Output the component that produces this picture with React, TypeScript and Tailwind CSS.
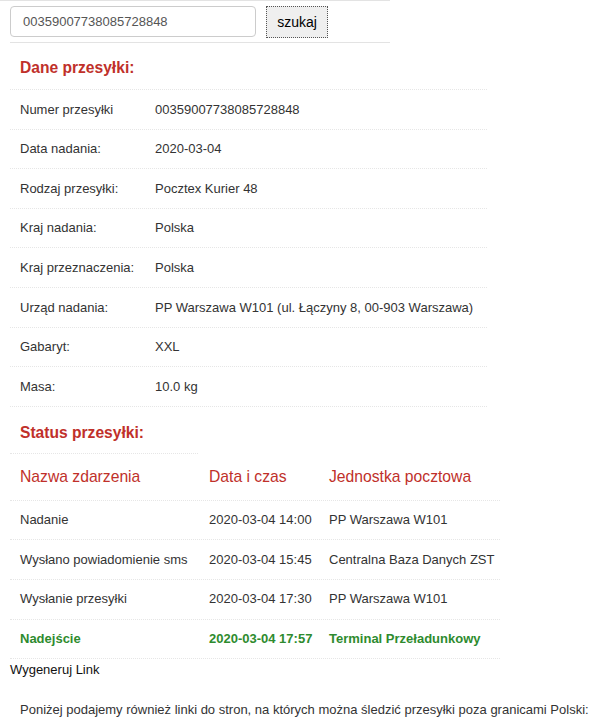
const details: [string, string][] = [
  ['Numer przesyłki', '00359007738085728848'],
  ['Data nadania:', '2020-03-04'],
  ['Rodzaj przesyłki:', 'Pocztex Kurier 48'],
  ['Kraj nadania:', 'Polska'],
  ['Kraj przeznaczenia:', 'Polska'],
  ['Urząd nadania:', 'PP Warszawa W101 (ul. Łączyny 8, 00-903 Warszawa)'],
  ['Gabaryt:', 'XXL'],
  ['Masa:', '10.0 kg'],
];

const events = [
  { name: 'Nadanie', date: '2020-03-04 14:00', unit: 'PP Warszawa W101', last: false },
  { name: 'Wysłano powiadomienie sms', date: '2020-03-04 15:45', unit: 'Centralna Baza Danych ZST', last: false },
  { name: 'Wysłanie przesyłki', date: '2020-03-04 17:30', unit: 'PP Warszawa W101', last: false },
  { name: 'Nadejście', date: '2020-03-04 17:57', unit: 'Terminal Przeładunkowy', last: true },
];

export default function App() {
  return (
    <div className="w-[613px] h-[720px] overflow-hidden bg-white text-[#333] font-['Liberation_Sans',Arial,sans-serif] text-[13px]">
      <div className="w-[390px] border-t border-[#e3e3e3]">
        <div className="flex items-start pl-[10px] pt-[5px] pb-[4px] ml-0">
          <div className="w-[246px] h-[31px] border border-[#ccc] rounded-[4px] flex items-center pl-[12px] text-[#555]">
            00359007738085728848
          </div>
          <button className="ml-[10px] w-[62px] h-[32px] bg-[#efefef] border border-dotted border-[#555] text-[14px] text-black">
            szukaj
          </button>
        </div>
        <div className="ml-[10px] border-b border-[#e3e3e3]" />
      </div>

      <h2 className="pl-[20px] pt-[15px] h-[46px] text-[#c0302a] font-bold text-[15.6px] leading-[20px]">
        Dane przesyłki:
      </h2>

      <div className="ml-[10px] w-[477px] border-t border-dotted border-[#e6e6e6]">
        {details.map(([label, value]) => (
          <div key={label} className="flex items-center h-[39.6px] border-b border-dotted border-[#e6e6e6]">
            <div className="w-[145px] pl-[10px]">{label}</div>
            <div className="whitespace-nowrap">{value}</div>
          </div>
        ))}
      </div>

      <div className="ml-[10px] w-[188px] h-[47px] border-b border-dotted border-[#e6e6e6] pl-[10px] pt-[16px]">
        <h2 className="text-[#c0302a] font-bold text-[15.6px] leading-[20px] whitespace-nowrap">Status przesyłki:</h2>
      </div>

      <div className="ml-[10px] w-[490px]">
        <div className="flex items-center h-[47px] border-b border-dotted border-[#e6e6e6] text-[15.7px] text-[#c0302a]">
          <div className="w-[199px] pl-[10px]">Nazwa zdarzenia</div>
          <div className="w-[120px]">Data i czas</div>
          <div>Jednostka pocztowa</div>
        </div>
        {events.map((e) => (
          <div
            key={e.name}
            className={`flex items-center h-[39.6px] border-b border-dotted border-[#e6e6e6] whitespace-nowrap ${
              e.last ? 'text-[#2e8b2e] font-bold' : ''
            }`}
          >
            <div className="w-[199px] pl-[10px]">{e.name}</div>
            <div className="w-[120px]">{e.date}</div>
            <div>{e.unit}</div>
          </div>
        ))}
      </div>

      <div className="pl-[10px] pt-[1px] text-[#111]">Wygeneruj Link</div>

      <p className="pl-[20px] pt-[20px] whitespace-nowrap">
        Poniżej podajemy również linki do stron, na których można śledzić przesyłki poza granicami Polski:
      </p>
    </div>
  );
}
